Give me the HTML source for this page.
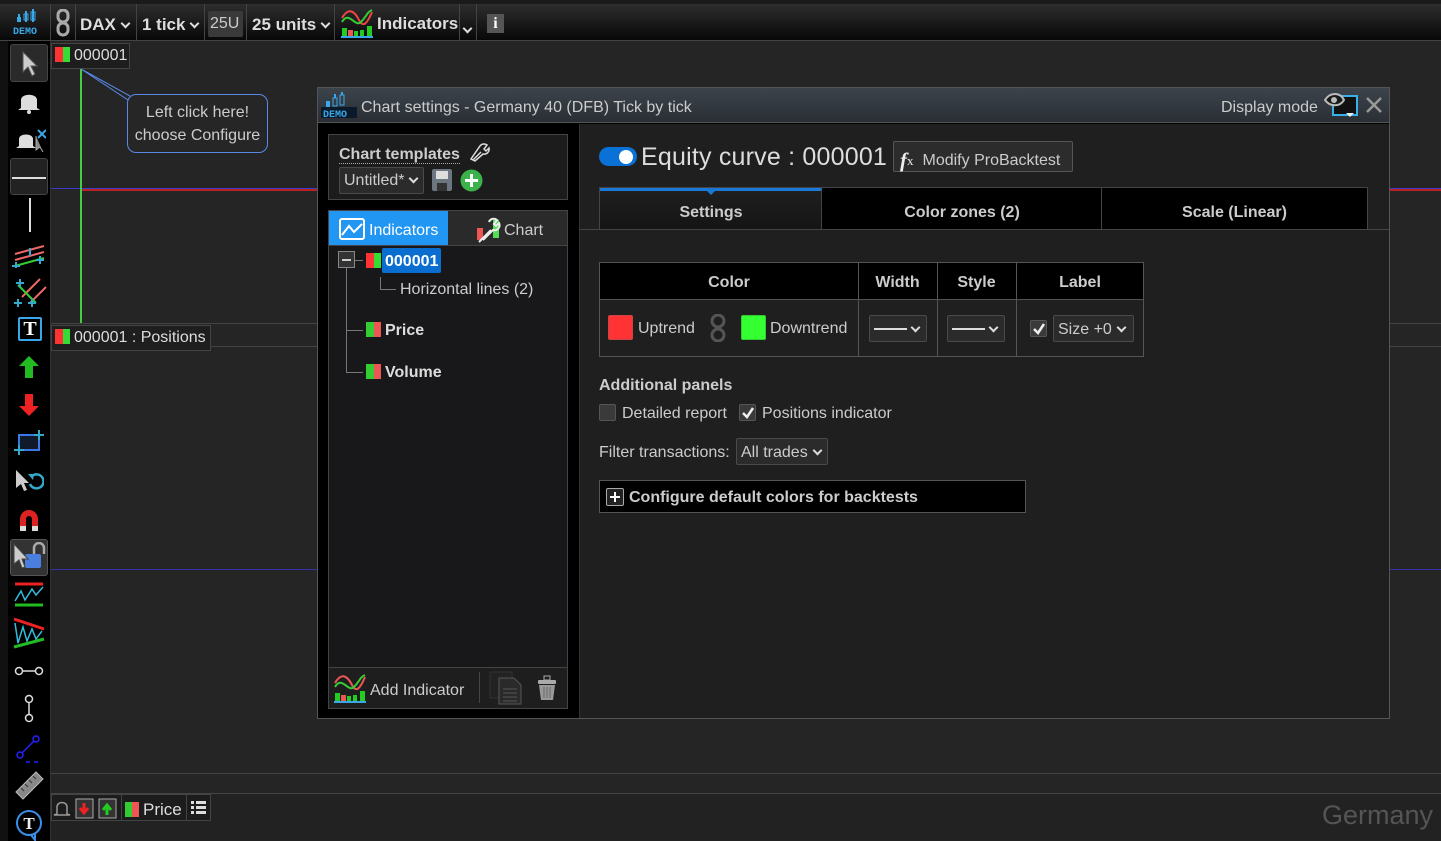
<!DOCTYPE html>
<html><head><meta charset="utf-8"><style>
*{box-sizing:border-box;margin:0;padding:0}
body{width:1441px;height:841px;overflow:hidden;background:#252525;font-family:"Liberation Sans",Arial,sans-serif;color:#ddd;position:relative;font-size:16px}
.a{position:absolute}
.txt{white-space:nowrap;margin-top:1px}
.b{font-weight:bold}
.sel{background:#2b2b2b;border:1px solid #4a4a4a;border-radius:2px}
.chev{display:inline-block;width:7px;height:7px;border-right:2px solid #ddd;border-bottom:2px solid #ddd;transform:rotate(45deg);margin-left:6px;position:relative;top:-3px}
.cb{width:17px;height:17px;background:#3a3a3a;border:1px solid #555;border-radius:2px}
</style></head><body>
<div class="a" style="left:0;top:0;width:1441px;height:5px;background:#1a1a1a"></div>
<div class="a" style="left:0;top:4px;width:1441px;height:37px;background:linear-gradient(#2e2e2e,#080808);border-bottom:1px solid #444"></div>
<div class="a" style="left:8px;top:4px;width:43px;height:37px;border-right:1px solid #444"></div>
<svg class="a" style="left:12px;top:8px" width="36" height="28"><g fill="#3aa8e8"><rect x="6" y="6" width="2" height="8"/><rect x="13" y="3" width="2" height="11"/><rect x="20" y="1" width="2" height="13"/><rect x="5" y="9" width="4" height="5"/><rect x="12" y="6" width="4" height="6" fill="none" stroke="#3aa8e8"/><rect x="19" y="4" width="4" height="8" fill="none" stroke="#3aa8e8"/></g><text x="1" y="26" font-size="10" fill="#3aa8e8" font-family="Liberation Mono" font-weight="bold">DEMO</text></svg>
<div class="a" style="left:51px;top:4px;width:25px;height:37px;border-right:1px solid #444"></div>
<svg class="a" style="left:55px;top:9px" width="16" height="28"><rect x="3" y="1" width="10" height="12" rx="5" fill="none" stroke="#aaa" stroke-width="3"/><rect x="3" y="14" width="10" height="12" rx="5" fill="none" stroke="#aaa" stroke-width="3"/></svg>
<div class="a txt b" style="left:80px;top:14px;font-size:17px">DAX<span class="chev"></span></div>
<div class="a" style="left:136px;top:4px;height:37px;border-left:1px solid #444"></div>
<div class="a txt b" style="left:142px;top:14px;font-size:17px">1 tick<span class="chev"></span></div>
<div class="a" style="left:204px;top:4px;height:37px;border-left:1px solid #444"></div>
<div class="a txt" style="left:208px;top:10px;width:35px;height:26px;background:#3a3a3a;border-radius:2px;font-size:16px;padding:4px 2px;color:#ccc">25U</div>
<div class="a" style="left:246px;top:4px;height:37px;border-left:1px solid #444"></div>
<div class="a txt b" style="left:252px;top:14px;font-size:17px">25 units<span class="chev"></span></div>
<div class="a" style="left:334px;top:4px;height:37px;border-left:1px solid #444"></div>
<svg class="a" style="left:341px;top:8px" width="32" height="30"><path d="M1 10 C8 -2 14 4 18 12 S26 16 31 4" stroke="#e44" fill="none" stroke-width="2"/><path d="M1 14 C8 2 14 20 20 14 S26 4 31 2" stroke="#3c3" fill="none" stroke-width="2"/><g fill="#2c2"><rect x="1" y="20" width="5" height="8"/><rect x="13" y="23" width="4" height="5"/><rect x="19" y="22" width="4" height="6"/><rect x="26" y="18" width="5" height="10"/></g><rect x="7" y="22" width="5" height="6" fill="#e55"/><rect x="0" y="28" width="32" height="2" fill="#3aa8e8"/></svg>
<div class="a txt b" style="left:377px;top:13px;font-size:17px">Indicators</div>
<div class="a" style="left:459px;top:4px;width:18px;height:37px;border-left:1px solid #444;border-right:1px solid #444"></div>
<span class="a chev" style="left:458px;top:19px"></span>
<div class="a" style="left:487px;top:14px;width:17px;height:19px;background:#555;color:#fff;font-weight:bold;font-family:'Liberation Serif';text-align:center;font-size:16px;line-height:19px">i</div>

<div class="a" style="left:0;top:41px;width:8px;height:800px;background:#111"></div>
<div class="a" style="left:8px;top:41px;width:43px;height:800px;background:#000;border-right:1px solid #333"></div>
<div class="a" style="left:10px;top:44px;width:38px;height:38px;background:#2a2a2a;border:1px solid #444;border-radius:3px"></div>
<svg class="a" style="left:20px;top:50px" width="20" height="28"><path d="M3 2 L3 22 L8 17 L12 26 L15 24 L11 16 L17 16 Z" fill="#ccc" stroke="#555"/></svg>
<svg class="a" style="left:14px;top:88px" width="30" height="26"><path d="M7 20 L7 12 C7 5 23 5 23 12 L23 20 L26 22 L4 22 Z" fill="#ddd"/><circle cx="15" cy="24" r="2" fill="#ddd"/></svg>
<svg class="a" style="left:14px;top:126px" width="32" height="26"><path d="M5 20 L5 13 C5 7 19 7 19 13 L19 20 L22 22 L2 22 Z" fill="#ddd"/><path d="M24 4 L32 12 M32 4 L24 12" stroke="#3aa8e8" stroke-width="2"/><path d="M22 10 L22 24 L26 21 L29 26" stroke="#aaa" fill="#888"/></svg>
<div class="a" style="left:10px;top:158px;width:38px;height:37px;background:#222;border:1px solid #444;border-radius:3px"></div>
<div class="a" style="left:12px;top:177px;width:34px;height:2px;background:#ddd"></div>
<div class="a" style="left:29px;top:198px;width:2px;height:34px;background:#ddd"></div>
<svg class="a" style="left:12px;top:240px" width="36" height="28"><path d="M3 14 L32 6 M3 20 L32 12" stroke="#e66" stroke-width="2"/><path d="M3 26 L32 18" stroke="#3c3" stroke-width="2"/><path d="M4 22v8M0 26h8M28 16v8M24 20h8M18 8v8" stroke="#3ac" stroke-width="2"/></svg>
<svg class="a" style="left:12px;top:275px" width="36" height="32"><path d="M10 22 L28 4 M18 28 L34 12" stroke="#e66" stroke-width="2"/><path d="M6 10 L24 28" stroke="#3c3" stroke-width="2"/><path d="M8 4v8M4 8h8M6 24v8M2 28h8M20 24v8M16 28h8" stroke="#3ac" stroke-width="2"/></svg>
<div class="a" style="left:18px;top:317px;width:24px;height:24px;border:2px solid #3aa8e8;border-radius:2px;color:#fff;font-family:'Liberation Serif';font-weight:bold;font-size:20px;text-align:center;line-height:20px">T</div>
<svg class="a" style="left:18px;top:355px" width="22" height="24"><path d="M11 1 L21 11 L15 11 L15 23 L7 23 L7 11 L1 11 Z" fill="#2b2"/></svg>
<svg class="a" style="left:18px;top:393px" width="22" height="24"><path d="M11 23 L21 13 L15 13 L15 1 L7 1 L7 13 L1 13 Z" fill="#e22"/></svg>
<svg class="a" style="left:14px;top:430px" width="30" height="26"><rect x="5" y="5" width="20" height="15" fill="#111a2a" stroke="#3a78e8" stroke-width="2"/><path d="M25 0v10M20 5h10M5 15v10M0 20h10" stroke="#3ac" stroke-width="2"/></svg>
<svg class="a" style="left:14px;top:468px" width="30" height="28"><path d="M2 2 L2 20 L7 16 L10 23 L13 22 L10 15 L15 15 Z" fill="#ccc"/><path d="M18 8 A7 7 0 1 1 16 16" stroke="#3ac" fill="none" stroke-width="2.5"/><path d="M14 6 L20 6 L19 12 Z" fill="#3ac"/></svg>
<svg class="a" style="left:16px;top:507px" width="26" height="26"><path d="M4 24 L4 12 A9 9 0 0 1 22 12 L22 24 L16 24 L16 12 A3 3 0 0 0 10 12 L10 24 Z" fill="#d22"/><rect x="4" y="19" width="6" height="5" fill="#ddd"/><rect x="16" y="19" width="6" height="5" fill="#ddd"/></svg>
<div class="a" style="left:10px;top:539px;width:38px;height:37px;background:#333;border:1px solid #555;border-radius:3px"></div>
<svg class="a" style="left:12px;top:542px" width="34" height="32"><path d="M22 12 L22 6 A5 5 0 0 1 32 6 L32 12" stroke="#aaa" fill="none" stroke-width="2.5"/><rect x="13" y="12" width="16" height="14" rx="2" fill="#4a7fe0"/><path d="M2 2 L2 22 L7 18 L10 26 L13 25 L10 17 L16 17 Z" fill="#ccc" stroke="#444"/></svg>
<svg class="a" style="left:13px;top:581px" width="32" height="28"><path d="M2 3h28" stroke="#e22" stroke-width="3"/><path d="M2 24h28" stroke="#2b2" stroke-width="3"/><path d="M2 20 L8 10 L12 19 L19 8 L23 14 L30 6" stroke="#3bd" fill="none" stroke-width="1.5"/></svg>
<svg class="a" style="left:12px;top:617px" width="34" height="32"><path d="M2 2 L32 12" stroke="#e22" stroke-width="3"/><path d="M2 30 L32 22" stroke="#2b2" stroke-width="3"/><path d="M3 6 L6 26 L11 10 L15 24 L20 12 L24 22 L30 14" stroke="#3bd" fill="none" stroke-width="1.5"/></svg>
<svg class="a" style="left:14px;top:661px" width="30" height="20"><circle cx="5" cy="10" r="3.5" stroke="#ddd" fill="none" stroke-width="1.5"/><circle cx="25" cy="10" r="3.5" stroke="#ddd" fill="none" stroke-width="1.5"/><path d="M8.5 10h13" stroke="#ddd" stroke-width="1.5"/></svg>
<svg class="a" style="left:19px;top:694px" width="20" height="30"><circle cx="10" cy="5" r="3.5" stroke="#ddd" fill="none" stroke-width="1.5"/><circle cx="10" cy="24" r="3.5" stroke="#ddd" fill="none" stroke-width="1.5"/><path d="M10 8.5v12" stroke="#ddd" stroke-width="1.5"/></svg>
<svg class="a" style="left:14px;top:733px" width="30" height="30"><circle cx="6" cy="22" r="3" stroke="#22f" fill="none" stroke-width="1.5"/><circle cx="22" cy="6" r="3" stroke="#22f" fill="none" stroke-width="1.5"/><path d="M8 20 L20 8" stroke="#22f" stroke-width="1.5"/><path d="M12 29h4M20 29h4" stroke="#22f" stroke-width="1.5"/></svg>
<svg class="a" style="left:12px;top:768px" width="34" height="34"><path d="M4 24 L24 4 L31 11 L11 31 Z" fill="#888" stroke="#bbb"/><path d="M9 20l3 3M13 16l3 3M17 12l3 3M21 8l3 3" stroke="#333"/></svg>
<svg class="a" style="left:13px;top:808px" width="32" height="33"><circle cx="16" cy="15" r="12" stroke="#3a8ee8" fill="none" stroke-width="2"/><path d="M18 27 L22 32 L22 25" stroke="#3a8ee8" fill="none" stroke-width="2"/><text x="16" y="21" font-size="17" text-anchor="middle" font-family="Liberation Serif" font-weight="bold" fill="#eee">T</text></svg>

<div class="a" style="left:51px;top:188px;width:1390px;height:1px;background:#3a3acc"></div>
<div class="a" style="left:81px;top:189px;width:1360px;height:2px;background:#b22"></div>
<div class="a" style="left:80px;top:69px;width:2px;height:254px;background:#4c4"></div>
<div class="a" style="left:51px;top:323px;width:1390px;height:1px;background:#444"></div>
<div class="a" style="left:51px;top:346px;width:1390px;height:1px;background:#444"></div>
<div class="a" style="left:51px;top:569px;width:1390px;height:1px;background:#3333aa"></div>
<div class="a" style="left:51px;top:773px;width:1390px;height:1px;background:#444"></div>
<div class="a" style="left:51px;top:793px;width:1390px;height:1px;background:#444"></div>
<div class="a" style="left:51px;top:794px;width:1390px;height:47px;background:#222"></div>

<div class="a txt" style="left:51px;top:43px;width:79px;height:26px;background:#1e1e1e;border:1px solid #444;padding:3px 0 0 3px;font-size:16px;margin-top:0"><span style="display:inline-block;width:8px;height:15px;background:#f33;vertical-align:-2px"></span><span style="display:inline-block;width:7px;height:15px;background:#3d3;vertical-align:-2px;margin-right:4px"></span>000001</div>
<svg class="a" style="left:80px;top:68px" width="60" height="40"><path d="M1 1 L50 28 M1 1 L48 32" stroke="#5a8ae8" stroke-width="1"/></svg>
<div class="a" style="left:127px;top:94px;width:141px;height:59px;border:1px solid #5a8ae8;border-radius:9px;background:#262626;text-align:center;font-size:16px;line-height:23px;padding-top:6px;color:#ccc">Left click here!<br>choose Configure</div>
<div class="a txt" style="left:51px;top:325px;width:160px;height:26px;background:#1e1e1e;border:1px solid #444;padding:3px 0 0 3px;font-size:16px;margin-top:0"><span style="display:inline-block;width:8px;height:15px;background:#f33;vertical-align:-2px"></span><span style="display:inline-block;width:7px;height:15px;background:#3d3;vertical-align:-2px;margin-right:4px"></span>000001 : Positions</div>

<div class="a" style="left:51px;top:794px;width:160px;height:27px;border:1px solid #444;background:#1c1c1c"></div>
<svg class="a" style="left:52px;top:797px" width="70" height="22"><path d="M5 17 L5 10 C5 4 15 4 15 10 L15 17 L18 18 L2 18 Z" fill="none" stroke="#999" stroke-width="1.5"/><rect x="24" y="2" width="17" height="19" fill="#333" stroke="#aaa"/><path d="M32 6v8M28 11 L32 16 L36 11" stroke="#e22" stroke-width="3"/><rect x="47" y="2" width="17" height="19" fill="#333" stroke="#aaa"/><path d="M55 18v-8M51 13 L55 8 L59 13" stroke="#2c2" stroke-width="3"/></svg>
<div class="a" style="left:121px;top:794px;height:27px;border-left:1px solid #444"></div>
<div class="a txt" style="left:125px;top:799px;font-size:17px"><span style="display:inline-block;width:7px;height:15px;background:#3c3;vertical-align:-2px"></span><span style="display:inline-block;width:7px;height:15px;background:#e55;vertical-align:-2px;margin-right:4px"></span>Price</div>
<div class="a" style="left:186px;top:794px;height:27px;border-left:1px solid #444"></div>
<svg class="a" style="left:191px;top:800px" width="16" height="16"><g fill="#ddd"><rect x="0" y="1" width="3" height="3"/><rect x="0" y="6" width="3" height="3"/><rect x="0" y="11" width="3" height="3"/><rect x="5" y="1" width="10" height="3"/><rect x="5" y="6" width="10" height="3"/><rect x="5" y="11" width="10" height="3"/></g></svg>
<div class="a txt" style="left:1322px;top:799px;font-size:27px;color:#555">Germany</div>

<div class="a" style="left:317px;top:87px;width:1073px;height:632px;background:#000;border:1px solid #555"></div>
<div class="a" style="left:318px;top:88px;width:1071px;height:35px;background:linear-gradient(#3c434b,#2a2f35);border-bottom:1px solid #555"></div>
<svg class="a" style="left:321px;top:92px" width="36" height="26"><g fill="#3aa8e8"><rect x="5" y="9" width="4" height="6"/><rect x="12" y="6" width="4" height="8" fill="none" stroke="#3aa8e8"/><rect x="19" y="3" width="4" height="10" fill="none" stroke="#3aa8e8"/><rect x="13" y="2" width="2" height="4"/><rect x="20" y="0" width="2" height="3"/></g><rect x="0" y="15" width="36" height="11" fill="#0a1a2a"/><text x="2" y="25" font-size="10" fill="#3aa8e8" font-family="Liberation Mono" font-weight="bold">DEMO</text></svg>
<div class="a txt" style="left:361px;top:98px;font-size:16px;color:#ccc">Chart settings - Germany 40 (DFB) Tick by tick</div>
<div class="a txt" style="left:1221px;top:98px;font-size:16px;color:#ccc">Display mode</div>
<svg class="a" style="left:1324px;top:90px" width="36" height="28"><rect x="9" y="6" width="24" height="19" fill="#111" stroke="#3ab0e8" stroke-width="2"/><path d="M1 10 C6 2 16 2 20 10 C16 17 6 17 1 10 Z" fill="#1a1a1a" stroke="#bbb" stroke-width="2"/><circle cx="10" cy="10" r="3" fill="#bbb"/><path d="M22 23 L30 23 L26 27 Z" fill="#eee"/></svg>
<svg class="a" style="left:1365px;top:96px" width="18" height="18"><path d="M2 2 L16 16 M16 2 L2 16" stroke="#999" stroke-width="2.5"/></svg>

<div class="a" style="left:579px;top:124px;width:810px;height:594px;background:#1f1f1f;border-left:1px solid #333"></div>

<div class="a" style="left:328px;top:134px;width:240px;height:66px;background:#1c1c1c;border:1px solid #444"></div>
<div class="a txt b" style="left:339px;top:145px;font-size:16px;color:#ccc;border-bottom:1px dotted #aaa;line-height:17px">Chart templates</div>
<svg class="a" style="left:470px;top:142px" width="20" height="20"><path d="M3 18 L11 10 M10 4 A5 5 0 0 1 17 3 L14 7 L16 9 L19 6 A5 5 0 0 1 13 12 L5 19 L1 17 Z" fill="none" stroke="#ddd" stroke-width="1.5"/></svg>
<div class="a txt sel" style="left:339px;top:167px;width:85px;height:27px;font-size:16px;padding:4px 0 0 4px;color:#ccc;margin-top:0">Untitled*<span class="chev"></span></div>
<svg class="a" style="left:431px;top:168px" width="22" height="24"><rect x="1" y="1" width="20" height="22" rx="2" fill="#6b7680"/><rect x="5" y="3" width="12" height="8" fill="#ddd"/><rect x="6" y="15" width="10" height="8" fill="#333"/></svg>
<svg class="a" style="left:460px;top:169px" width="23" height="23"><circle cx="11.5" cy="11.5" r="11" fill="#3cb24a"/><path d="M11.5 5v13M5 11.5h13" stroke="#fff" stroke-width="3"/></svg>

<div class="a" style="left:328px;top:210px;width:240px;height:36px;background:#2a2a2a;border:1px solid #444"></div>
<div class="a" style="left:329px;top:211px;width:119px;height:34px;background:#2196f3"></div>
<svg class="a" style="left:339px;top:218px" width="26" height="22"><rect x="1" y="1" width="24" height="20" rx="2" fill="none" stroke="#fff" stroke-width="2"/><path d="M3 17 L10 8 L15 14 L23 6" stroke="#fff" fill="none" stroke-width="2"/></svg>
<div class="a txt" style="left:369px;top:221px;font-size:16px;color:#fff">Indicators</div>
<svg class="a" style="left:475px;top:216px" width="28" height="28"><rect x="2" y="12" width="6" height="12" fill="#e55"/><rect x="18" y="4" width="6" height="18" fill="#5d5"/><path d="M4 26 L16 14 M14 6 A5 5 0 0 1 22 4 L19 8 L21 10 L24 7 A5 5 0 0 1 18 14 L8 24" stroke="#eee" fill="none" stroke-width="2"/></svg>
<div class="a txt" style="left:504px;top:221px;font-size:16px;color:#ccc">Chart</div>

<div class="a" style="left:328px;top:246px;width:240px;height:463px;background:#18181a;border:1px solid #444;border-top:none"></div>
<div class="a" style="left:338px;top:251px;width:17px;height:17px;border:1px solid #888;background:#333"></div>
<div class="a" style="left:342px;top:259px;width:9px;height:2px;background:#ccc"></div>
<div class="a" style="left:346px;top:268px;width:1px;height:104px;background:#777"></div>
<div class="a" style="left:346px;top:330px;width:17px;height:1px;background:#777"></div>
<div class="a" style="left:346px;top:372px;width:17px;height:1px;background:#777"></div>
<div class="a" style="left:355px;top:260px;width:8px;height:1px;background:#777"></div>
<div class="a" style="left:366px;top:253px;width:8px;height:15px;background:#f33"></div>
<div class="a" style="left:374px;top:253px;width:7px;height:15px;background:#3d3"></div>
<div class="a txt b" style="left:382px;top:248px;width:59px;height:25px;background:#0a6ed1;border-radius:2px;color:#fff;font-size:16px;padding:5px 0 0 3px;margin-top:0">000001</div>
<div class="a" style="left:380px;top:277px;width:1px;height:12px;background:#777"></div>
<div class="a" style="left:380px;top:289px;width:16px;height:1px;background:#777"></div>
<div class="a txt" style="left:400px;top:280px;font-size:16px;color:#ccc">Horizontal lines (2)</div>
<div class="a" style="left:366px;top:322px;width:8px;height:15px;background:#3c3"></div>
<div class="a" style="left:374px;top:322px;width:7px;height:15px;background:#e55"></div>
<div class="a txt b" style="left:385px;top:321px;font-size:16px;color:#ddd">Price</div>
<div class="a" style="left:366px;top:364px;width:8px;height:15px;background:#3c3"></div>
<div class="a" style="left:374px;top:364px;width:7px;height:15px;background:#e55"></div>
<div class="a txt b" style="left:385px;top:363px;font-size:16px;color:#ddd">Volume</div>
<div class="a" style="left:329px;top:667px;width:238px;height:41px;background:#1e1e1e;border-top:1px solid #444"></div>
<svg class="a" style="left:334px;top:673px" width="32" height="31"><path d="M1 10 C8 -2 14 4 18 12 S26 16 31 4" stroke="#e55" fill="none" stroke-width="2"/><path d="M1 14 C8 2 14 20 20 14 S26 4 31 2" stroke="#3c3" fill="none" stroke-width="2"/><g fill="#2c2"><rect x="1" y="20" width="5" height="8"/><rect x="13" y="23" width="4" height="5"/><rect x="19" y="22" width="4" height="6"/><rect x="26" y="18" width="5" height="10"/></g><rect x="7" y="22" width="5" height="6" fill="#e55"/><rect x="0" y="28" width="32" height="2" fill="#3aa8e8"/></svg>
<div class="a txt" style="left:370px;top:681px;font-size:16px;color:#ccc">Add Indicator</div>
<div class="a" style="left:479px;top:672px;width:1px;height:31px;background:#444"></div>
<svg class="a" style="left:489px;top:671px" width="34" height="34"><rect x="1" y="1" width="22" height="26" fill="#222" stroke="#333"/><path d="M10 7 L25 7 L32 14 L32 33 L10 33 Z" fill="#2a2a2a" stroke="#555"/><path d="M14 18h14M14 22h14M14 26h14M14 30h14" stroke="#555"/></svg>
<svg class="a" style="left:536px;top:675px" width="22" height="26"><rect x="2" y="5" width="18" height="4" rx="1" fill="#aaa"/><rect x="8" y="1" width="6" height="4" fill="none" stroke="#aaa"/><path d="M3 10 L19 10 L17 25 L5 25 Z" fill="#999"/><path d="M8 12v11M11 12v11M14 12v11" stroke="#666"/></svg>

<div class="a" style="left:599px;top:147px;width:38px;height:19px;border-radius:10px;background:#0a72d6"></div>
<div class="a" style="left:619px;top:150px;width:14px;height:14px;border-radius:50%;background:#fff"></div>
<div class="a txt" style="left:641px;top:142px;font-size:25px;color:#ddd;letter-spacing:0.2px">Equity curve : 000001</div>
<div class="a txt" style="left:893px;top:141px;width:180px;height:31px;background:#2c2c2c;border:1px solid #555;border-radius:2px;padding:6px 0 0 6px;font-size:16px;color:#ccc;margin-top:0"><i style="font-family:'Liberation Serif';font-weight:bold;font-size:21px;color:#eee;vertical-align:-2px">f</i><span style="font-family:'Liberation Serif';font-size:13px;color:#eee;margin-right:9px">x</span>Modify ProBacktest</div>

<div class="a" style="left:599px;top:187px;width:769px;height:43px;background:#000;border:1px solid #444;border-bottom:none"></div>
<div class="a" style="left:600px;top:188px;width:222px;height:42px;background:linear-gradient(#1f1f1f,#141414);border-top:3px solid #1a78d6;border-right:1px solid #444"></div>
<div class="a" style="left:706px;top:190px;width:0;height:0;border-left:5px solid transparent;border-right:5px solid transparent;border-top:5px solid #1a78d6"></div>
<div class="a" style="left:1101px;top:188px;width:1px;height:42px;background:#444"></div>
<div class="a txt b" style="left:600px;top:203px;width:222px;text-align:center;font-size:16px;color:#ccc">Settings</div>
<div class="a txt b" style="left:823px;top:203px;width:278px;text-align:center;font-size:16px;color:#ccc">Color zones (2)</div>
<div class="a txt b" style="left:1102px;top:203px;width:265px;text-align:center;font-size:16px;color:#ccc">Scale (Linear)</div>
<div class="a" style="left:579px;top:229px;width:810px;height:1px;background:#444"></div>

<div class="a" style="left:599px;top:262px;width:545px;height:95px;border:1px solid #555;background:#1f1f1f"></div>
<div class="a" style="left:600px;top:263px;width:543px;height:37px;background:#000;border-bottom:1px solid #555"></div>
<div class="a" style="left:858px;top:263px;width:1px;height:93px;background:#555"></div>
<div class="a" style="left:937px;top:263px;width:1px;height:93px;background:#555"></div>
<div class="a" style="left:1016px;top:263px;width:1px;height:93px;background:#555"></div>
<div class="a txt b" style="left:600px;top:273px;width:258px;text-align:center;font-size:16px;color:#ccc">Color</div>
<div class="a txt b" style="left:858px;top:273px;width:79px;text-align:center;font-size:16px;color:#ccc">Width</div>
<div class="a txt b" style="left:937px;top:273px;width:79px;text-align:center;font-size:16px;color:#ccc">Style</div>
<div class="a txt b" style="left:1016px;top:273px;width:128px;text-align:center;font-size:16px;color:#ccc">Label</div>
<div class="a" style="left:608px;top:315px;width:25px;height:25px;background:#f33;border:1px solid #c44;border-radius:2px"></div>
<div class="a txt" style="left:638px;top:319px;font-size:16px;color:#ccc">Uptrend</div>
<svg class="a" style="left:710px;top:314px" width="16" height="28"><rect x="2" y="1" width="12" height="12" rx="6" fill="none" stroke="#555" stroke-width="3"/><rect x="2" y="15" width="12" height="12" rx="6" fill="none" stroke="#555" stroke-width="3"/></svg>
<div class="a" style="left:741px;top:315px;width:25px;height:25px;background:#3f3;border:1px solid #3c3;border-radius:2px"></div>
<div class="a txt" style="left:770px;top:319px;font-size:16px;color:#ccc">Downtrend</div>
<div class="a sel" style="left:869px;top:315px;width:58px;height:27px"><div style="position:absolute;left:4px;top:12px;width:33px;height:2px;background:#ddd"></div><span class="chev" style="position:absolute;left:36px;top:8px"></span></div>
<div class="a sel" style="left:947px;top:315px;width:58px;height:27px"><div style="position:absolute;left:4px;top:12px;width:33px;height:2px;background:#ddd"></div><span class="chev" style="position:absolute;left:36px;top:8px"></span></div>
<div class="a cb" style="left:1030px;top:320px"></div>
<svg class="a" style="left:1032px;top:322px" width="14" height="14"><path d="M2 7 L6 11 L12 2" stroke="#eee" fill="none" stroke-width="2.5"/></svg>
<div class="a txt sel" style="left:1053px;top:315px;width:81px;height:27px;padding:5px 0 0 4px;font-size:16px;color:#ccc;margin-top:0">Size +0<span class="chev"></span></div>

<div class="a txt b" style="left:599px;top:376px;font-size:16px;color:#ccc">Additional panels</div>
<div class="a cb" style="left:599px;top:404px"></div>
<div class="a txt" style="left:622px;top:404px;font-size:16px;color:#ccc">Detailed report</div>
<div class="a cb" style="left:739px;top:404px"></div>
<svg class="a" style="left:741px;top:406px" width="14" height="14"><path d="M2 7 L6 11 L12 2" stroke="#eee" fill="none" stroke-width="2.5"/></svg>
<div class="a txt" style="left:762px;top:404px;font-size:16px;color:#ccc">Positions indicator</div>
<div class="a txt" style="left:599px;top:443px;font-size:16px;color:#ccc">Filter transactions:</div>
<div class="a txt sel" style="left:736px;top:438px;width:92px;height:27px;padding:5px 0 0 4px;font-size:16px;color:#ccc;margin-top:0">All trades<span class="chev"></span></div>
<div class="a" style="left:599px;top:480px;width:427px;height:33px;background:#000;border:1px solid #555"></div>
<div class="a" style="left:606px;top:488px;width:18px;height:18px;border:1px solid #aaa;background:#222;border-radius:2px"></div>
<div class="a" style="left:610px;top:496px;width:10px;height:2px;background:#fff"></div>
<div class="a" style="left:614px;top:492px;width:2px;height:10px;background:#fff"></div>
<div class="a txt b" style="left:629px;top:488px;font-size:16px;color:#ccc">Configure default colors for backtests</div>
</body></html>
